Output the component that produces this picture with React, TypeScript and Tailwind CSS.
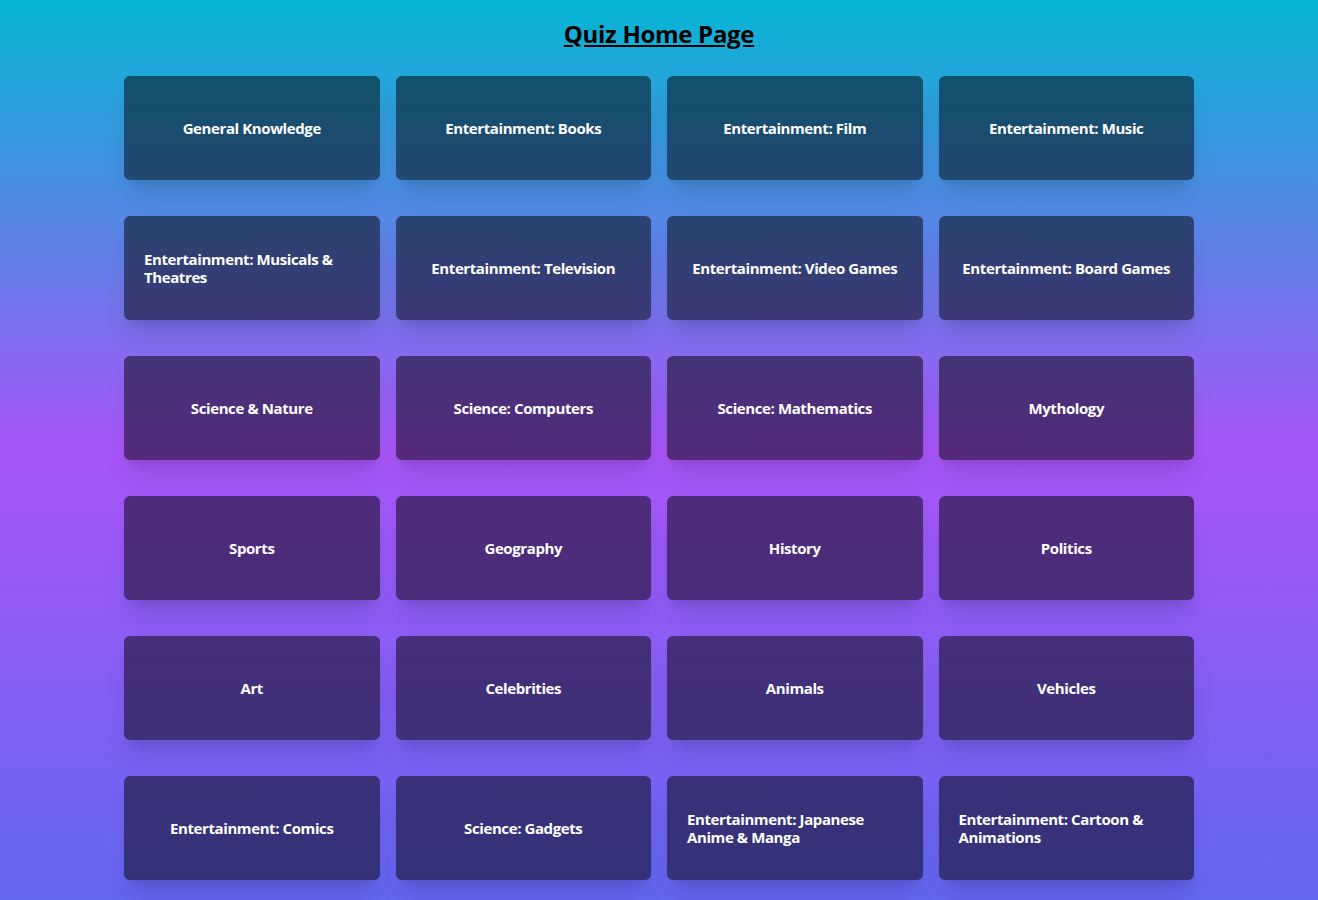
const categories = [
  "General Knowledge",
  "Entertainment: Books",
  "Entertainment: Film",
  "Entertainment: Music",
  "Entertainment: Musicals & Theatres",
  "Entertainment: Television",
  "Entertainment: Video Games",
  "Entertainment: Board Games",
  "Science & Nature",
  "Science: Computers",
  "Science: Mathematics",
  "Mythology",
  "Sports",
  "Geography",
  "History",
  "Politics",
  "Art",
  "Celebrities",
  "Animals",
  "Vehicles",
  "Entertainment: Comics",
  "Science: Gadgets",
  "Entertainment: Japanese Anime & Manga",
  "Entertainment: Cartoon & Animations",
];

export default function App() {
  return (
    <div className="min-h-screen bg-linear-to-b/srgb from-[#06b6d4] via-[#a855f7] to-[#6366f1] pt-[18px] pb-5 font-['Open_Sans',sans-serif]">
      <h1 className="text-center text-2xl leading-8 font-bold tracking-[-0.3px] text-black underline underline-offset-2">
        Quiz Home Page
      </h1>
      <div className="mx-auto mt-[26px] grid w-[1070px] grid-cols-4 gap-x-4 gap-y-9">
        {categories.map((name) => (
          <div
            key={name}
            className="flex h-[104px] cursor-pointer items-center justify-center rounded-md bg-black/50 p-5 shadow-xl"
          >
            <p className="text-[15px] leading-[18px] font-bold tracking-[-0.4px] text-white">{name}</p>
          </div>
        ))}
      </div>
    </div>
  );
}
